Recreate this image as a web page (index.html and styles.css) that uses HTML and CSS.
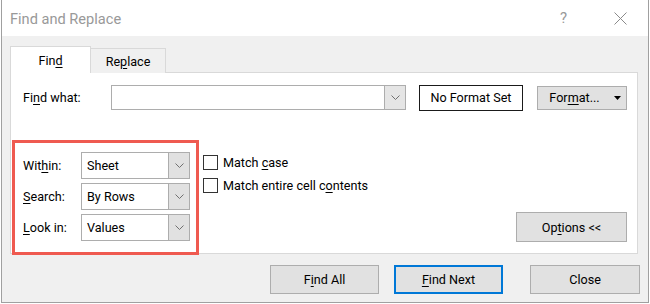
FILE: index.html
```html
<!DOCTYPE html>
<html>
<head>
<meta charset="UTF-8">
<title>Find and Replace</title>
<link rel="stylesheet" href="styles.css">
</head>
<body>
  <div class="dialog">
    <div class="titlebar">
      <span class="title">Find and Replace</span>
      <span class="help">?</span>
      <svg class="close-x" width="13" height="13" viewBox="0 0 13 13">
        <path d="M0.5 0.5 L12.5 12.5 M12.5 0.5 L0.5 12.5" stroke="#8a8a8a" stroke-width="1" fill="none"/>
      </svg>
    </div>
    <div class="dialog-body">
      <div class="tabs">
        <div class="tab active"><span>Fin<u>d</u></span></div>
        <div class="tab"><span>Re<u>p</u>lace</span></div>
      </div>
      <div class="panel">
        <div class="find-row">
          <label class="find-label">Fi<u>n</u>d what:</label>
          <div class="combo find-combo">
            <span class="combo-text"></span>
            <span class="combo-btn"><svg width="9" height="5" viewBox="0 0 9 5"><path d="M0.5 0.5 L4.5 4.5 L8.5 0.5" stroke="#707070" fill="none"/></svg></span>
          </div>
          <div class="format-set">No Format Set</div>
          <div class="btn format-btn"><span>For<u>m</u>at...</span><svg class="caret" width="7" height="4" viewBox="0 0 7 4"><path d="M0 0 L7 0 L3.5 4 Z" fill="#000"/></svg></div>
        </div>
        <div class="options-row">
          <div class="highlight">
            <div class="opt-row">
              <label class="opt-label">Wit<u>h</u>in:</label>
              <div class="combo select">
                <span class="combo-text">Sheet</span>
                <span class="combo-btn"><svg width="9" height="5" viewBox="0 0 9 5"><path d="M0.5 0.5 L4.5 4.5 L8.5 0.5" stroke="#707070" fill="none"/></svg></span>
              </div>
            </div>
            <div class="opt-row">
              <label class="opt-label"><u>S</u>earch:</label>
              <div class="combo select">
                <span class="combo-text">By Rows</span>
                <span class="combo-btn"><svg width="9" height="5" viewBox="0 0 9 5"><path d="M0.5 0.5 L4.5 4.5 L8.5 0.5" stroke="#707070" fill="none"/></svg></span>
              </div>
            </div>
            <div class="opt-row">
              <label class="opt-label"><u>L</u>ook in:</label>
              <div class="combo select">
                <span class="combo-text">Values</span>
                <span class="combo-btn"><svg width="9" height="5" viewBox="0 0 9 5"><path d="M0.5 0.5 L4.5 4.5 L8.5 0.5" stroke="#707070" fill="none"/></svg></span>
              </div>
            </div>
          </div>
          <div class="checks">
            <div class="check-row"><span class="checkbox"></span><span>Match <u>c</u>ase</span></div>
            <div class="check-row"><span class="checkbox"></span><span>Match entire cell c<u>o</u>ntents</span></div>
          </div>
          <div class="btn options-btn"><span>Op<u>t</u>ions &lt;&lt;</span></div>
        </div>
      </div>
      <div class="footer">
        <div class="btn find-all"><span>F<u>i</u>nd All</span></div>
        <div class="btn find-next"><span><u>F</u>ind Next</span></div>
        <div class="btn close-btn">Close</div>
      </div>
    </div>
  </div>
</body>
</html>
```

FILE: styles.css
```css
body {
  margin: 0;
  background: #fff;
  font-family: Roboto, "Noto Sans", sans-serif;
  font-size: 12.6px;
  color: #000;
}
u {
  text-underline-offset: 2px;
}
.dialog {
  margin-left: 1px;
  width: 648px;
  height: 303px;
  box-sizing: border-box;
  border: 1px solid #a0a0a0;
  border-top: none;
  background: #f0f0f0;
}
.titlebar {
  height: 36px;
  background: #fff;
  display: flex;
  align-items: center;
  padding-left: 8px;
  padding-right: 21px;
}
.title {
  font-size: 14.6px;
  color: #999;
  margin-top: 2px;
}
.help {
  margin-left: auto;
  margin-right: 47px;
  font-size: 15px;
  color: #999;
}
.dialog-body {
  padding: 10px 10px 0 8px;
}
.tabs {
  display: flex;
  align-items: flex-end;
  margin-bottom: -1px;
}
.tab {
  box-sizing: border-box;
  border: 1px solid #d9d9d9;
  border-bottom: none;
  display: flex;
  align-items: center;
  justify-content: center;
}
.tab.active {
  position: relative;
  width: 81px;
  height: 27px;
  background: #fff;
}
.tab + .tab {
  margin-left: -1px;
  width: 76px;
  height: 25px;
  background: #f0f0f0;
}
.panel {
  box-sizing: border-box;
  width: 628px;
  height: 182px;
  border: 1px solid #d9d9d9;
  background: #fff;
}
.find-row {
  display: flex;
  align-items: center;
  margin-top: 12px;
  height: 25px;
}
.find-label {
  box-sizing: border-box;
  width: 100px;
  padding-left: 12px;
}
.combo {
  box-sizing: border-box;
  display: flex;
  border: 1px solid #adadad;
  background: #fff;
}
.combo-text {
  flex: 1;
  padding-left: 5px;
  display: flex;
  align-items: center;
}
.combo-btn {
  width: 20px;
  border-left: 1px solid #adadad;
  background: #e5e5e5;
  display: flex;
  align-items: center;
  justify-content: center;
}
.find-combo {
  width: 295px;
  height: 25px;
}
.format-set {
  box-sizing: border-box;
  width: 104px;
  height: 26px;
  margin-left: 13px;
  border: 1px solid #1a1a1a;
  display: flex;
  align-items: center;
  justify-content: center;
}
.btn {
  box-sizing: border-box;
  border: 1px solid #adadad;
  background: #e1e1e1;
  display: flex;
  align-items: center;
  justify-content: center;
}
.format-btn {
  width: 90px;
  height: 24px;
  margin-left: 14px;
  padding-left: 6px;
}
.caret {
  margin-left: 14px;
}
.options-row {
  display: flex;
  margin-top: 30px;
  height: 115px;
  margin-bottom: -2px;
}
.highlight {
  box-sizing: border-box;
  width: 187px;
  margin-left: 1px;
  border: 3px solid #ef5a50;
  padding: 9px 0 0 8px;
  background: #fff;
}
.opt-row {
  display: flex;
  align-items: center;
  margin-bottom: 4px;
}
.opt-label {
  width: 58px;
}
.select {
  width: 109px;
  height: 27px;
}
.select .combo-btn {
  background: #e1e1e1;
}
.checks {
  margin-left: 4px;
  padding-top: 15px;
}
.check-row {
  display: flex;
  align-items: center;
  height: 15px;
  margin-bottom: 8px;
}
.checkbox {
  box-sizing: border-box;
  width: 15px;
  height: 15px;
  border: 1px solid #333;
  margin-right: 5px;
}
.options-btn {
  width: 111px;
  height: 30px;
  margin-left: auto;
  margin-right: 10px;
  align-self: flex-end;
  margin-bottom: 13px;
}
.footer {
  display: flex;
  justify-content: flex-end;
  margin-top: 11px;
  margin-right: -2px;
}
.footer .btn {
  height: 29px;
}
.find-all {
  width: 109px;
}
.find-next {
  width: 109px;
  margin-left: 15px;
  border: 2px solid #0078d7;
}
.close-btn {
  width: 110px;
  margin-left: 27px;
}
```
